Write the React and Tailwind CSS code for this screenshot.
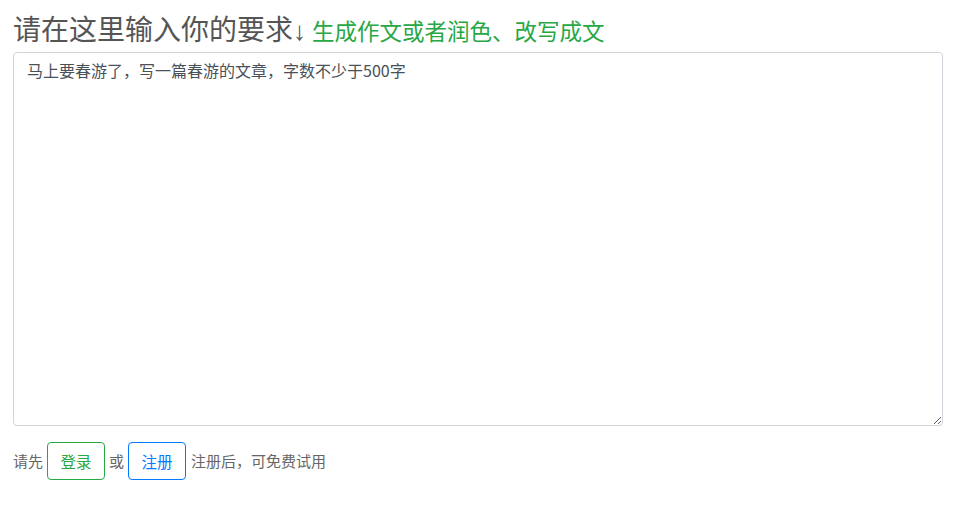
export default function App() {
  const font = { fontFamily: '"Noto Sans CJK SC", "Noto Sans", sans-serif' };

  return (
    <div className="min-h-[508px] bg-white px-[13px] pt-[12px]" style={font}>
      <h3 className="mb-[5px] text-[28px] leading-[1.2] font-normal text-[#555]">
        请在这里输入你的要求<span className="text-[26px]" style={{ fontFamily: '"Liberation Sans", sans-serif' }}>↓</span>
        <small className="ml-[6px] text-[22.5px] text-[#28a745]">生成作文或者润色、改写成文</small>
      </h3>

      <textarea
        className="block h-[374px] w-[930px] rounded-[4px] border border-[#ced4da] px-[13px] py-[5px] text-[16px] leading-[1.5] text-[#495057] outline-none"
        defaultValue="马上要春游了，写一篇春游的文章，字数不少于500字"
        style={font}
      />

      <div className="mt-[16px] flex items-center gap-[4px] text-[15px] text-[#666]">
        <span>请先</span>
        <button className="h-[38px] w-[58px] rounded-[4px] border border-[#28a745] text-[15.5px] text-[#28a745]">登录</button>
        <span>或</span>
        <button className="h-[38px] w-[58px] rounded-[4px] border border-[#007bff] text-[15.5px] text-[#007bff]">注册</button>
        <span className="ml-[1px]">注册后，可免费试用</span>
      </div>
    </div>
  );
}
